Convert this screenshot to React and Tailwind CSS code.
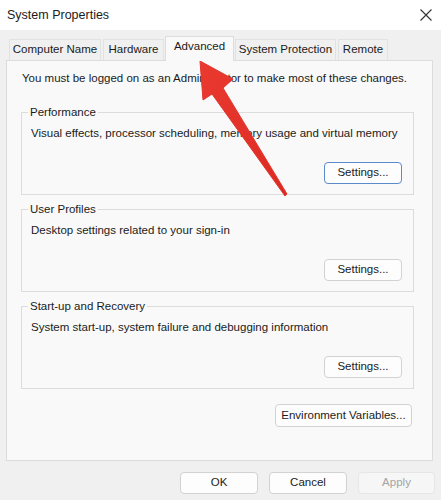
import React from 'react';

const font = { fontFamily: '"Liberation Sans", Arial, sans-serif' };

const Button = ({ children, primary, disabled, className = '' }) => (
  <button
    className={`h-[22px] rounded-[4px] border text-[11.5px] leading-none whitespace-nowrap ${
      primary
        ? 'border-[#5b8bcb] bg-[#fdfdfd] text-[#1b1b1b]'
        : disabled
        ? 'border-[#e6e6e6] bg-[#f6f6f6] text-[#a4a4a4]'
        : 'border-[#d2d2d2] bg-[#fdfdfd] text-[#1b1b1b]'
    } ${className}`}
  >
    {children}
  </button>
);

const Group = ({ title, text, primary, className = '' }) => (
  <fieldset className={`w-[393px] min-w-0 border border-[#dcdcdc] pl-[9px] pr-[11px] pb-[10px] ${className}`}>
    <legend className="-ml-[3px] px-[2px] text-[11.5px] leading-[16px] text-[#1b1b1b] whitespace-nowrap">{title}</legend>
    <div className="mt-[5px] text-[11.5px] leading-[16px] text-[#1b1b1b] whitespace-nowrap">{text}</div>
    <div className="mt-[21px] flex justify-end">
      <Button primary={primary} className="w-[78px]">Settings...</Button>
    </div>
  </fieldset>
);

const tabs = ['Computer Name', 'Hardware', 'Advanced', 'System Protection', 'Remote'];
const tabWidths = ['w-[92px]', 'w-[61px]', 'w-[69px]', 'w-[101px]', 'w-[50px]'];

const App = () => {
  return (
    <div className="relative w-[441px] h-[500px] overflow-hidden bg-[#f0f0f0]" style={font}>
      {/* Title bar */}
      <div className="h-[30px] bg-white flex items-center justify-between pl-[7px] pr-[9px]">
        <span className="text-[12.5px] text-[#1b1b1b]">System Properties</span>
        <svg width="12" height="12" viewBox="0 0 12 12" className="text-[#333]">
          <path d="M0.5 0.5 L11.5 11.5 M11.5 0.5 L0.5 11.5" stroke="currentColor" strokeWidth="1.1" />
        </svg>
      </div>

      {/* Tabs */}
      <div className="mt-[6px] ml-[8px] flex items-end h-[24px]">
        {tabs.map((t, i) =>
          t === 'Advanced' ? (
            <div
              key={t}
              className={`${tabWidths[i]} h-[25px] -mb-px relative z-10 border border-b-0 border-[#dcdcdc] bg-[#f9f9f9] flex items-center justify-center text-[11.5px] text-[#1b1b1b] pb-[4px] whitespace-nowrap`}
            >
              {t}
            </div>
          ) : (
            <div
              key={t}
              className={`${tabWidths[i]} h-[21px] mx-px border border-b-0 border-[#e2e2e2] bg-[#f0f0f0] flex items-center justify-center text-[11.5px] text-[#1b1b1b] whitespace-nowrap`}
            >
              {t}
            </div>
          )
        )}
      </div>

      {/* Panel */}
      <div className="ml-[6px] w-[427px] h-[401px] border border-[#dcdcdc] bg-[#f9f9f9] pl-[14px] flex flex-col">
        <div className="mt-[9px] ml-px text-[11.5px] leading-[16px] text-[#1b1b1b] whitespace-nowrap">
          You must be logged on as an Administrator to make most of these changes.
        </div>
        <Group
          className="mt-[18px]"
          title="Performance"
          text="Visual effects, processor scheduling, memory usage and virtual memory"
          primary
        />
        <Group className="mt-[6px]" title="User Profiles" text="Desktop settings related to your sign-in" />
        <Group
          className="mt-[6px]"
          title="Start-up and Recovery"
          text="System start-up, system failure and debugging information"
        />
        <div className="mt-[15px] w-[393px] flex justify-end">
          <Button className="w-[137px] h-[23px] mr-[2px]">Environment Variables...</Button>
        </div>
      </div>

      {/* Bottom buttons */}
      <div className="mt-[11px] ml-[180px] flex gap-[11px]">
        <Button className="w-[78px] h-[21px]">OK</Button>
        <Button className="w-[78px] h-[21px]">Cancel</Button>
        <Button disabled className="w-[77px] h-[21px]">Apply</Button>
      </div>

      {/* Red annotation arrow */}
      <svg className="absolute left-0 top-0 pointer-events-none" width="441" height="500" viewBox="0 0 441 500">
        <defs>
          <linearGradient id="arrowRed" x1="0" y1="0" x2="1" y2="1">
            <stop offset="0" stopColor="#ea3a30" />
            <stop offset="1" stopColor="#dc2a22" />
          </linearGradient>
        </defs>
        <polygon
          points="200,61 233,79 223,88 287,194 285,196 212,94 203,100"
          fill="url(#arrowRed)"
          strokeLinejoin="round"
          stroke="#e3342b"
          strokeWidth="1"
        />
      </svg>
    </div>
  );
};

export default App;
